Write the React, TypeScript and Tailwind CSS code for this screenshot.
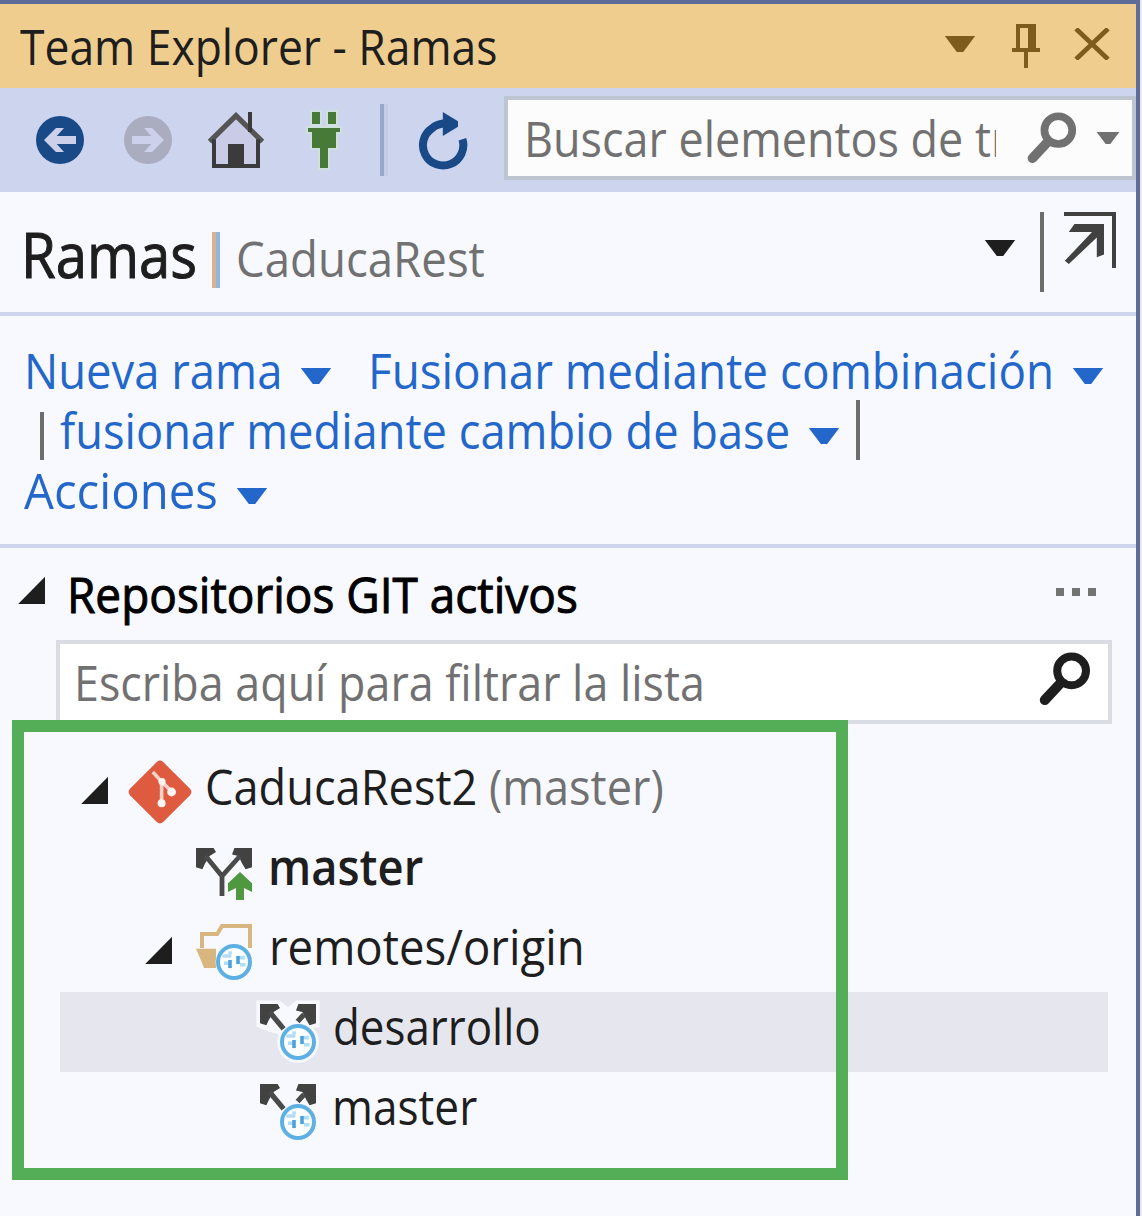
import { useLayoutEffect, useRef, useState, type ReactNode } from "react";

/** A single line of text condensed horizontally so that it fills `width` pixels. */
function Fit({ width, size = "text-[50px]", className = "", children }: { width: number; size?: string; className?: string; children: ReactNode }) {
  const ref = useRef<HTMLSpanElement>(null);
  const [scale, setScale] = useState(1);
  useLayoutEffect(() => {
    if (ref.current) setScale(width / ref.current.offsetWidth);
  }, [width]);
  return (
    <span className="block h-[60px] shrink-0" style={{ width }}>
      <span
        ref={ref}
        className={`block w-max origin-left whitespace-nowrap leading-[60px] ${size} ${className}`}
        style={{ transform: `scaleX(${scale})` }}
      >
        {children}
      </span>
    </span>
  );
}

function Caret({ className = "", size = "h-4 w-8" }: { className?: string; size?: string }) {
  return (
    <svg viewBox="0 0 8 4" preserveAspectRatio="none" className={`shrink-0 ${size} ${className}`} fill="currentColor">
      <path d="M0.2 0H7.8L4.8 4H3.2Z" />
    </svg>
  );
}

function Expander({ className = "" }: { className?: string }) {
  return (
    <svg viewBox="0 0 7 7" className={`size-7 shrink-0 text-[#1e1e1e] ${className}`} fill="currentColor">
      <path d="M7 0.2V7H0.3Z" />
    </svg>
  );
}

function Pin() {
  return (
    <svg viewBox="0 0 7 11" className="h-11 w-7" fill="#7e5c1d">
      <path fillRule="evenodd" d="M1 0H6V6H7V7H4V11H3V7H0V6H1ZM2 1V6H4V1Z" />
    </svg>
  );
}

function Close() {
  return (
    <svg viewBox="0 0 10 8" className="h-8 w-10" stroke="#7e5c1d" strokeWidth="1.2" fill="none">
      <path d="M1 0.2L9 7.8M9 0.2L1 7.8" />
    </svg>
  );
}

function CircleArrow({ className = "", flip = false }: { className?: string; flip?: boolean }) {
  return (
    <svg viewBox="0 0 12 12" className={`size-12 shrink-0 ${flip ? "-scale-x-100" : ""} ${className}`}>
      <circle cx="6" cy="6" r="6" fill="currentColor" />
      <path d="M2 6L5 3H7L5.2 5H10V7H5.2L7 9H5Z" fill="#ccd0ea" />
    </svg>
  );
}

function Home() {
  return (
    <svg viewBox="0 0 14 14" className="size-14 shrink-0">
      <path d="M1.5 7L7 1.5L12.5 7V13.5H1.5Z" fill="#cacbe7" />
      <path d="M0.4 7.4L7 0.9L13.6 7.4" fill="none" stroke="#555555" strokeWidth="1.3" />
      <path d="M10 0H11V5H10ZM1 6.8H2V13H4V8H8V14H1ZM12 6.8H13V14H8V13H12Z" fill="#3b3b3b" />
      <path d="M4 8H5V13H4Z" fill="#cacbe7" />
      <path d="M5 8H9V13H5Z" fill="#3b3b3b" />
    </svg>
  );
}

function Plug() {
  return (
    <svg viewBox="-1 -1 10 17" className="h-[68px] w-10 shrink-0">
      <path
        d="M1 0H3V3H1ZM5 0H7V3H5ZM0 4H8V5H7V9H5V14H3V9H1V5H0Z"
        fill="#477a36"
        stroke="#d0dfe0"
        strokeWidth="1"
        paintOrder="stroke"
      />
    </svg>
  );
}

function Refresh() {
  return (
    <svg viewBox="0 0 13 15" className="h-[60px] w-[52px] shrink-0">
      <path d="M11.1 6.8A5.05 5.05 0 1 1 3.5 4.1Q4.8 2.9 7 2.9" fill="none" stroke="#194a87" strokeWidth="2" />
      <path d="M6.2 0L10 2.3V3.7L6.2 6Z" fill="#194a87" />
    </svg>
  );
}

function Lens({ className = "" }: { className?: string }) {
  return (
    <svg viewBox="0 0 14 14" className={`shrink-0 ${className}`} fill="none" stroke="currentColor">
      <circle cx="8.9" cy="4.7" r="3.6" strokeWidth="2" />
      <path d="M6.2 7.7L2.2 12" strokeWidth="2.5" strokeLinecap="round" />
    </svg>
  );
}

function PopOut() {
  return (
    <svg viewBox="0 0 13 14" className="h-14 w-[52px] shrink-0" fill="#414141">
      <path d="M0 0H13V14H12V1H0Z" />
      <path d="M2.6 3H10V10.6L8.2 11.3V6.4L1.2 13L0.2 12.2L7 5H1.2Z" />
    </svg>
  );
}

function Git() {
  return (
    <svg viewBox="0 0 16 16" className="size-16 shrink-0">
      <path d="M7.2 0.5Q8 -0.2 8.8 0.5L15.5 7.2Q16.2 8 15.5 8.8L8.8 15.5Q8 16.2 7.2 15.5L0.5 8.8Q-0.2 8 0.5 7.2Z" fill="#df5b3f" />
      <path d="M6.2 3L8.4 5.4L10.9 7.9M8.4 5.3V11" fill="none" stroke="#f6d3ca" strokeWidth="0.9" />
      <g fill="#fff5f2">
        <circle cx="8.5" cy="5.4" r="0.9" />
        <circle cx="10.9" cy="8" r="1.1" />
        <circle cx="8.4" cy="10.8" r="1" />
      </g>
    </svg>
  );
}

const ARROW_HEADS =
  "M0 0H4.4L5 1L3.4 2L2.2 4L1.6 5.3L0 4.8ZM14 0H9.6L9 1.6L10.6 2L11.6 4L12.4 5.3L14 4.8Z";

function LocalBranch() {
  return (
    <svg viewBox="0 0 14 14" className="size-14 shrink-0">
      <path d={ARROW_HEADS} fill="#424242" />
      <path d="M2.4 2L6.5 7L11 2M6.5 6.6V12" fill="none" stroke="#4a4a4a" strokeWidth="1.2" />
      <path
        d="M11 6L14 8.8V11L12 10V13H10V10L8 11V8.8Z"
        fill="#4f9840"
        stroke="#f8f9ff"
        strokeWidth="0.6"
        paintOrder="stroke"
      />
    </svg>
  );
}

function Globe() {
  return (
    <>
      <circle cx="9.5" cy="9.5" r="4" fill="#fdfeff" stroke="#5cb0e4" strokeWidth="1" />
      <path d="M6.6 8H8.4L8.6 6.8M7 9.8H8.2M10.4 8.4H12.2M11 10.2H12.4" fill="none" stroke="#b5dcf6" strokeWidth="0.9" />
      <path d="M8.5 9V11M10.5 8V10" stroke="#4ba3dc" strokeWidth="0.9" />
    </>
  );
}

function RemoteBranch() {
  return (
    <svg viewBox="-1 -1 16 16" className="size-16 shrink-0">
      <g fill="#f8f9ff" stroke="#f8f9ff">
        <path d="M0 0H4.6L7 2L9.4 0H14V5H9L4.6 6.6L2.4 6L0 5Z" strokeWidth="1.8" />
        <circle cx="9.5" cy="9.5" r="4.5" strokeWidth="1.4" />
      </g>
      <path d={ARROW_HEADS} fill="#424242" />
      <path d="M2.4 2L5.9 6.2M11 2.6L9.4 4.4" stroke="#4a4a4a" strokeWidth="1.3" />
      <Globe />
    </svg>
  );
}

function RemoteFolder() {
  return (
    <svg viewBox="0 0 14 14" className="size-14 shrink-0">
      <path d="M1.5 6V2.5H5.3L6.5 0.5H13.5V6" fill="none" stroke="#d8b67f" />
      <path d="M0 6.2H5V11H2L1.2 9Z" fill="#d8b67f" />
      <circle cx="9.5" cy="9.5" r="4.6" fill="#f8f9ff" />
      <Globe />
    </svg>
  );
}

export default function App() {
  return (
    <div className="h-[1216px] w-[1142px] overflow-hidden bg-[#e9e7ec] font-['Open_Sans',sans-serif] text-[#1e1e1e]">
      <div className="relative h-full w-[1140px] border-t-4 border-r-4 border-[#5d6b99] bg-[#f8f9ff]">
        <header className="flex h-[84px] items-start bg-[#efcd8e]">
          <div className="ml-5 pt-3">
            <Fit width={477}>Team Explorer - Ramas</Fit>
          </div>
          <Caret className="mt-8 ml-[447px] text-[#7e5c1d]" />
          <div className="mt-5 ml-9"><Pin /></div>
          <div className="mt-6 ml-8"><Close /></div>
        </header>

        <div className="flex h-[104px] items-start bg-[#ccd4ee]">
          <CircleArrow className="mt-7 ml-9 text-[#194a87]" />
          <CircleArrow flip className="mt-7 ml-10 text-[#a9adbf]" />
          <div className="mt-6 ml-9"><Home /></div>
          <div className="mt-5 ml-10"><Plug /></div>
          <div className="mt-4 ml-9 h-[72px] w-2 border-l-4 border-[#98a7cc] bg-[#c3cbe6]" />
          <div className="mt-6 ml-[30px]"><Refresh /></div>
          <div className="mt-2 ml-auto flex h-[84px] w-[632px] items-start border-4 border-[#bdc5d1] bg-[#fcfcfc] text-[#717171]">
            <div className="mt-2 ml-4 w-[472px] overflow-hidden">
              <Fit width={485}>Buscar elementos de tr</Fit>
            </div>
            <Lens className="mt-3 ml-7 size-[54px]" />
            <Caret className="mt-8 ml-[18px]" size="h-3 w-6" />
          </div>
        </div>

        <div className="flex h-[124px] items-start border-b-4 border-[#ccd4ee]">
          <div className="mt-8 ml-[21px]">
            <Fit width={176} size="text-[62px]" className="[-webkit-text-stroke:1px_currentColor]">Ramas</Fit>
          </div>
          <div className="mt-10 ml-[15px] h-14 w-2 border-r-4 border-[#8fb5e3] bg-[#d8b48c]" />
          <div className="mt-9 ml-4 text-[#717171]">
            <Fit width={249}>CaducaRest</Fit>
          </div>
          <Caret className="mt-12 ml-[499px]" />
          <div className="mt-5 ml-6 h-20 w-1 bg-[#6d6d6d]" />
          <div className="mt-5 ml-5"><PopOut /></div>
        </div>

        <nav className="h-[232px] border-b-4 border-[#ccd4ee] pt-6 text-[#2267c9]">
          <div className="flex h-[60px] items-start">
            <div className="ml-6"><Fit width={258}>Nueva rama</Fit></div>
            <Caret className="mt-7 ml-[18px]" />
            <div className="ml-9"><Fit width={686}>Fusionar mediante combinación</Fit></div>
            <Caret className="mt-7 ml-[18px]" />
          </div>
          <div className="flex h-[60px] items-start">
            <div className="mt-3 ml-10 h-12 w-1 bg-[#6d6d6d]" />
            <div className="ml-4"><Fit width={730}>fusionar mediante cambio de base</Fit></div>
            <Caret className="mt-7 ml-[18px]" />
            <div className="ml-4 h-[60px] w-1 bg-[#6d6d6d]" />
          </div>
          <div className="flex h-[60px] items-start">
            <div className="ml-6"><Fit width={194}>Acciones</Fit></div>
            <Caret className="mt-7 ml-[18px]" />
          </div>
        </nav>

        <div className="flex h-[92px] items-start">
          <Expander className="mt-7 ml-[17px]" />
          <div className="mt-4 ml-[22px] text-black">
            <Fit width={511} className="[-webkit-text-stroke:1px_currentColor]">Repositorios GIT activos</Fit>
          </div>
          <div className="mt-10 ml-auto mr-10 flex gap-2">
            <span className="size-2 bg-[#747474]" />
            <span className="size-2 bg-[#747474]" />
            <span className="size-2 bg-[#747474]" />
          </div>
        </div>

        <div className="ml-14 flex h-[84px] w-[1056px] items-start border-4 border-[#d9dce3] bg-white">
          <div className="mt-2 ml-[14px] text-[#717171]">
            <Fit width={631}>Escriba aquí para filtrar la lista</Fit>
          </div>
          <Lens className="mt-2 mr-4 ml-auto size-14" />
        </div>

        <ul className="mt-7">
          <li className="flex h-20 items-start">
            <Expander className="mt-6 ml-20" />
            <div className="mt-2 ml-5"><Git /></div>
            <div className="mt-1 ml-[13px]"><Fit width={272}>CaducaRest2</Fit></div>
            <div className="mt-1 ml-3 text-[#717171]"><Fit width={175}>(master)</Fit></div>
          </li>
          <li className="flex h-20 items-start">
            <div className="mt-4 ml-[196px]"><LocalBranch /></div>
            <div className="mt-1 ml-4"><Fit width={155} className="font-semibold">master</Fit></div>
          </li>
          <li className="flex h-20 items-start">
            <Expander className="mt-6 ml-36" />
            <div className="mt-3 ml-6"><RemoteFolder /></div>
            <div className="mt-1 ml-[17px]"><Fit width={316}>remotes/origin</Fit></div>
          </li>
          <li className="ml-[60px] flex h-20 w-[1048px] items-start bg-[#e6e7ee]">
            <div className="mt-2 ml-[196px]"><RemoteBranch /></div>
            <div className="mt-1 ml-[13px]"><Fit width={208}>desarrollo</Fit></div>
          </li>
          <li className="ml-[60px] flex h-20 w-[1048px] items-start">
            <div className="mt-2 ml-[196px]"><RemoteBranch /></div>
            <div className="mt-1 ml-3"><Fit width={145}>master</Fit></div>
          </li>
        </ul>

        <div className="pointer-events-none absolute top-[716px] left-3 h-[460px] w-[836px] border-12 border-[#54ad57]" />
      </div>
    </div>
  );
}
